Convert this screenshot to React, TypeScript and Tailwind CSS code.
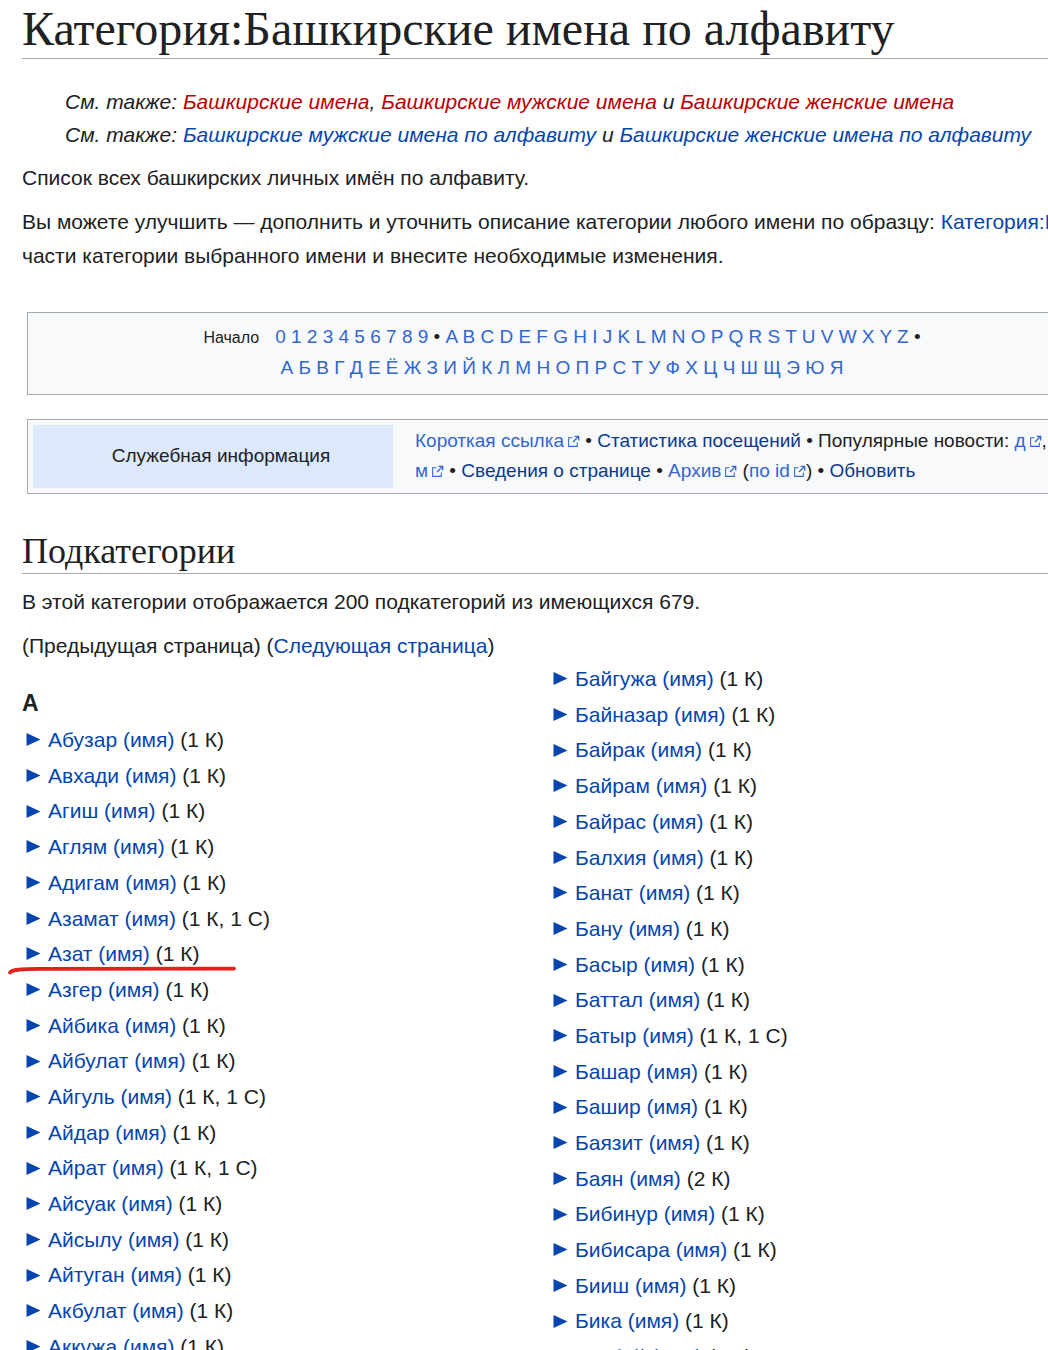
import React from "react";

type Item = { name: string; count: string };

const colA: Item[] = [
  { name: "Абузар", count: "1 К" },
  { name: "Авхади", count: "1 К" },
  { name: "Агиш", count: "1 К" },
  { name: "Аглям", count: "1 К" },
  { name: "Адигам", count: "1 К" },
  { name: "Азамат", count: "1 К, 1 С" },
  { name: "Азат", count: "1 К" },
  { name: "Азгер", count: "1 К" },
  { name: "Айбика", count: "1 К" },
  { name: "Айбулат", count: "1 К" },
  { name: "Айгуль", count: "1 К, 1 С" },
  { name: "Айдар", count: "1 К" },
  { name: "Айрат", count: "1 К, 1 С" },
  { name: "Айсуак", count: "1 К" },
  { name: "Айсылу", count: "1 К" },
  { name: "Айтуган", count: "1 К" },
  { name: "Акбулат", count: "1 К" },
  { name: "Аккужа", count: "1 К" },
];

const colB: Item[] = [
  { name: "Байгужа", count: "1 К" },
  { name: "Байназар", count: "1 К" },
  { name: "Байрак", count: "1 К" },
  { name: "Байрам", count: "1 К" },
  { name: "Байрас", count: "1 К" },
  { name: "Балхия", count: "1 К" },
  { name: "Банат", count: "1 К" },
  { name: "Бану", count: "1 К" },
  { name: "Басыр", count: "1 К" },
  { name: "Баттал", count: "1 К" },
  { name: "Батыр", count: "1 К, 1 С" },
  { name: "Башар", count: "1 К" },
  { name: "Башир", count: "1 К" },
  { name: "Баязит", count: "1 К" },
  { name: "Баян", count: "2 К" },
  { name: "Бибинур", count: "1 К" },
  { name: "Бибисара", count: "1 К" },
  { name: "Бииш", count: "1 К" },
  { name: "Бика", count: "1 К" },
  { name: "Бикбай", count: "1 К" },
];

const latin = "A B C D E F G H I J K L M N O P Q R S T U V W X Y Z".split(" ");
const cyr = "А Б В Г Д Е Ё Ж З И Й К Л М Н О П Р С Т У Ф Х Ц Ч Ш Щ Э Ю Я".split(" ");
const digits = "0 1 2 3 4 5 6 7 8 9".split(" ");

function ExtIcon() {
  return (
    <svg width="13" height="13" viewBox="0 0 12 12" className="inline-block ml-[3px] align-[-1px]">
      <path d="M9.5 7v3.5h-8v-8H5" fill="none" stroke="#3366cc" strokeWidth="1" />
      <path d="M7 1.2h3.8V5" fill="none" stroke="#3366cc" strokeWidth="1.2" />
      <path d="M10.6 1.4L5.5 6.5" fill="none" stroke="#3366cc" strokeWidth="1.2" />
    </svg>
  );
}

function Row({ item }: { item: Item }) {
  return (
    <div className="flex items-center h-[35.7px] pl-[4px]">
      <svg width="15" height="15" viewBox="0 0 15 15" className="shrink-0">
        <polygon points="0.5,1 14.5,7.5 0.5,14" fill="#0645ad" />
      </svg>
      <span className="ml-[7px] whitespace-nowrap">
        <a className="text-[#0645ad]">{item.name} (имя)</a>
        <span className="text-[#202122]"> ({item.count})</span>
      </span>
    </div>
  );
}

export default function App() {
  return (
    <div className="w-[1048px] h-[1350px] overflow-hidden bg-white relative text-[#202122] font-['Liberation_Sans',Arial,sans-serif] text-[21px]">
      <div className="w-[1100px] pl-[22px]">
        <h1 className="font-['Liberation_Serif','Times_New_Roman',serif] text-[48px] leading-[52px] pt-[3px] pb-[3px] border-b border-[#a2a9b1] whitespace-nowrap">
          Категория:Башкирские имена по алфавиту
        </h1>

        <div className="mt-[26px] pl-[43px] italic leading-[33px] whitespace-nowrap">
          <div>
            См. также: <a className="text-[#ba0000]">Башкирские имена</a>,{" "}
            <a className="text-[#ba0000]">Башкирские мужские имена</a> и{" "}
            <a className="text-[#ba0000]">Башкирские женские имена</a>
          </div>
          <div>
            См. также: <a className="text-[#0645ad]">Башкирские мужские имена по алфавиту</a> и{" "}
            <a className="text-[#0645ad]">Башкирские женские имена по алфавиту</a>
          </div>
        </div>

        <p className="mt-[10px] leading-[34px]">Список всех башкирских личных имён по алфавиту.</p>
        <p className="mt-[10px] leading-[34px] whitespace-nowrap">
          Вы можете улучшить — дополнить и уточнить описание категории любого имени по образцу:{" "}
          <a className="text-[#0645ad]">Категория:Башкирские имена</a>
          <br />
          части категории выбранного имени и внесите необходимые изменения.
        </p>

        {/* alphabetical navigation */}
        <div className="mt-[39px] ml-[5px] w-[1070px] border border-[#a2a9b1] bg-[#f8f9fa] pt-[9px] pb-[11px] text-center text-[19px] leading-[30px]">
          <div className="whitespace-nowrap">
            <span className="text-[16px] mr-[16px]">Начало</span>
            <span className="text-[#3366cc]">{digits.join(" ")}</span>
            <span> • </span>
            <span className="text-[#3366cc]">{latin.join(" ")}</span>
            <span> •</span>
          </div>
          <div className="whitespace-nowrap text-[#3366cc]">{cyr.join(" ")}</div>
        </div>

        {/* service info */}
        <div className="mt-[24px] ml-[5px] w-[1070px] border border-[#a2a9b1] bg-[#f8f9fa] p-[5px] flex items-stretch">
          <div className="w-[360px] h-[63px] bg-[#dce8fc] flex items-center justify-center pl-[16px] text-[19px]">
            Служебная информация
          </div>
          <div className="pl-[22px] pt-[1px] text-[19px] leading-[30px] whitespace-nowrap">
            <div>
              <a className="text-[#3366cc]">Короткая ссылка</a>
              <ExtIcon /> • <a className="text-[#0b3a8f]">Статистика посещений</a> • Популярные новости:{" "}
              <a className="text-[#3366cc]">д</a>
              <ExtIcon />, <a className="text-[#3366cc]">н</a>
            </div>
            <div>
              <a className="text-[#3366cc]">м</a>
              <ExtIcon /> • <a className="text-[#0b3a8f]">Сведения о странице</a> •{" "}
              <a className="text-[#3366cc]">Архив</a>
              <ExtIcon /> (<a className="text-[#3366cc]">по id</a>
              <ExtIcon />) • <a className="text-[#0b3a8f]">Обновить</a>
            </div>
          </div>
        </div>

        <h2 className="mt-[36px] font-['Liberation_Serif','Times_New_Roman',serif] text-[36px] leading-[42px] border-b border-[#a2a9b1] pb-[1px]">
          Подкатегории
        </h2>
        <p className="mt-[11px] leading-[34px]">В этой категории отображается 200 подкатегорий из имеющихся 679.</p>
        <p className="mt-[10px] leading-[34px]">
          (Предыдущая страница) (<a className="text-[#0645ad]">Следующая страница</a>)
        </p>

        <div className="-mt-[2px] flex">
          <div className="w-[527px]">
            <h3 className="font-bold text-[23px] leading-[30px] mt-[27px] mb-[4px]">А</h3>
            {colA.map((it) => (
              <Row key={it.name} item={it} />
            ))}
          </div>
          <div className="w-[527px]">
            {colB.map((it) => (
              <Row key={it.name} item={it} />
            ))}
          </div>
        </div>
      </div>

      {/* hand-drawn red marker under one entry */}
      <svg className="absolute left-0 top-[960px]" width="245" height="20" viewBox="0 0 245 20">
        <path
          d="M10 12.5 C 12 9.5, 20 9, 40 8.8 L 234 8.6"
          fill="none"
          stroke="#e3201b"
          strokeWidth="3.8"
          strokeLinecap="round"
        />
      </svg>
    </div>
  );
}
